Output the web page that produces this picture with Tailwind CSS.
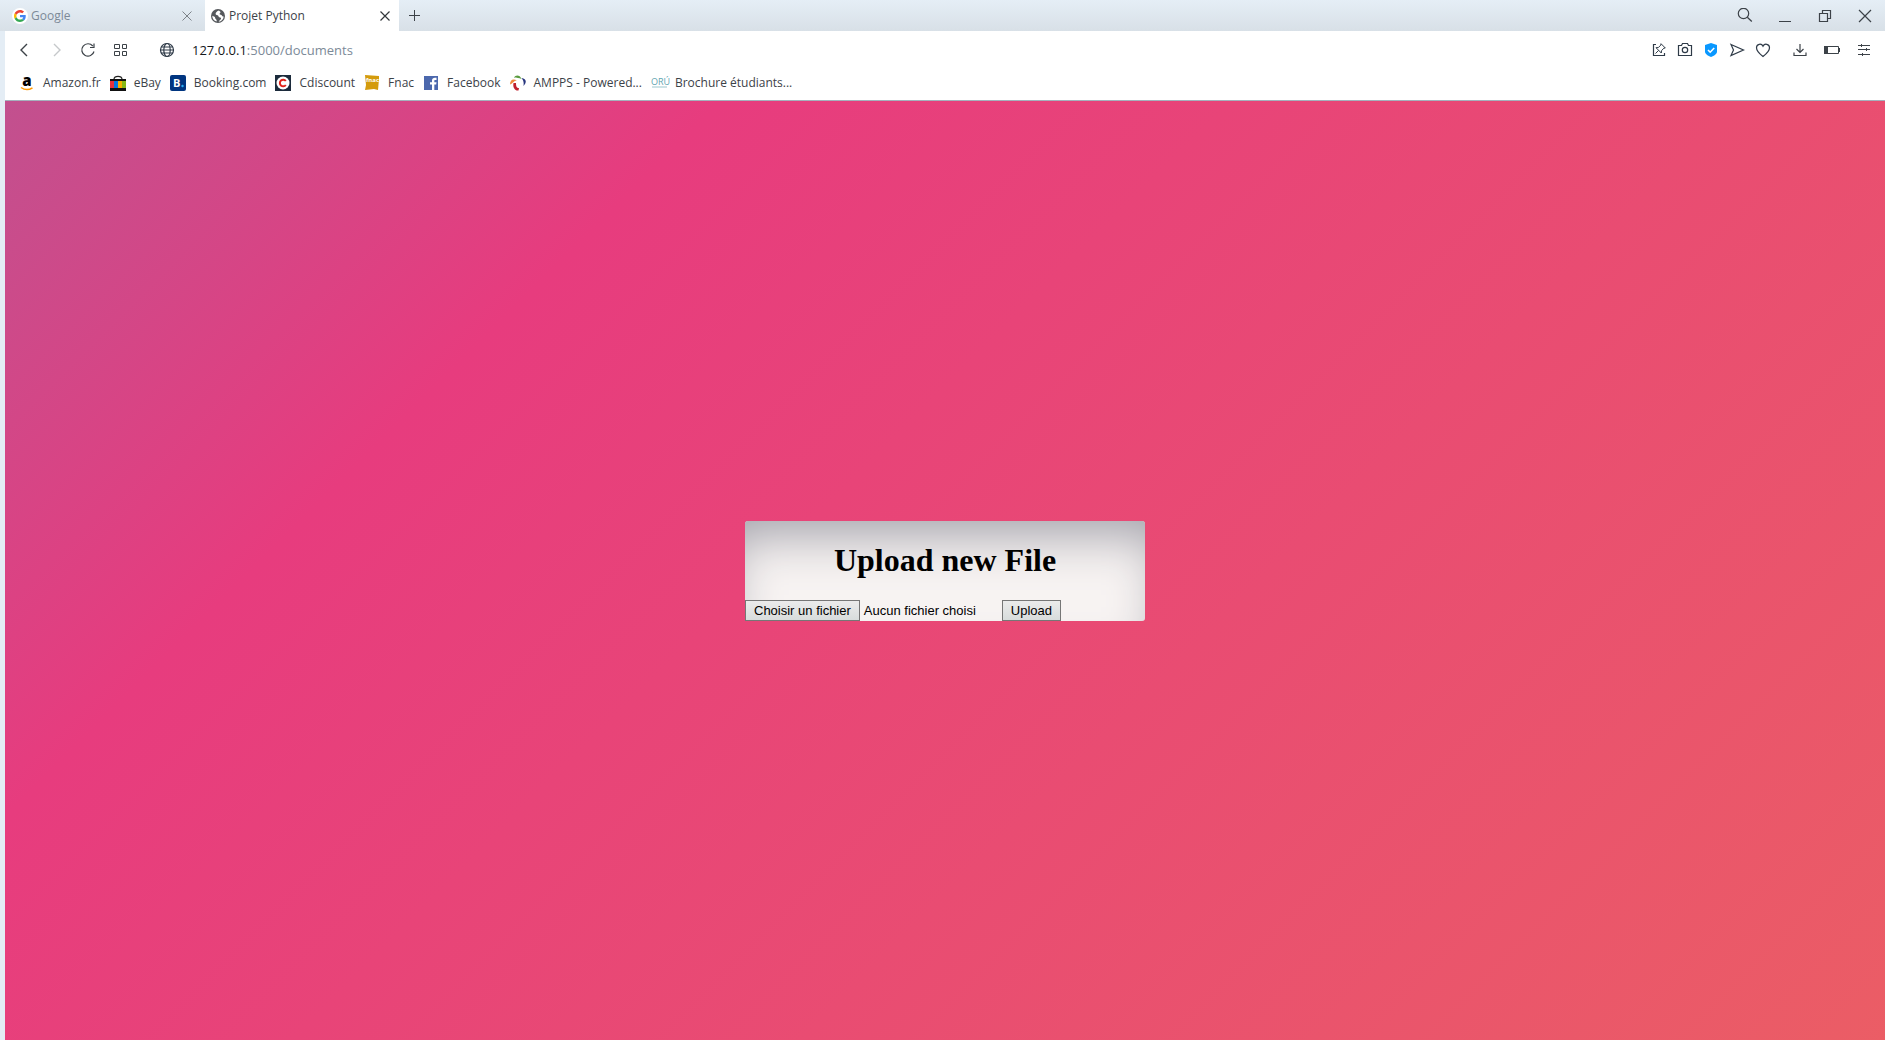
<!DOCTYPE html>
<html lang="fr">
<head>
<meta charset="utf-8">
<title>Projet Python</title>
<script src="https://cdn.jsdelivr.net/npm/@tailwindcss/browser@4"></script>
</head>
<body class="flex min-h-screen flex-col bg-[#e4edf5] font-['Open_Sans',sans-serif] text-[#3c4248]">

<header>
  <div class="flex h-[31px] items-stretch bg-linear-to-b from-[#e5eef6] to-[#d8e0e7]">
    <div class="flex w-[205px] items-center pl-3 pr-3 text-xs text-[#7c8a98]">
      <span class="grid size-4 place-items-center rounded-full bg-white">
        <svg class="size-3" viewBox="0 0 48 48"><path fill="#EA4335" d="M24 9.5c3.54 0 6.71 1.22 9.21 3.6l6.85-6.85C35.9 2.38 30.47 0 24 0 14.62 0 6.51 5.38 2.56 13.22l7.98 6.19C12.43 13.72 17.74 9.5 24 9.5z"/><path fill="#4285F4" d="M46.98 24.55c0-1.57-.15-3.09-.38-4.55H24v9.02h12.94c-.58 2.96-2.26 5.48-4.78 7.18l7.73 6c4.51-4.18 7.09-10.36 7.09-17.65z"/><path fill="#FBBC05" d="M10.53 28.59A14.5 14.5 0 0 1 9.77 24c0-1.6.27-3.14.76-4.59l-7.98-6.19A23.9 23.9 0 0 0 0 24c0 3.88.92 7.54 2.56 10.78l7.97-6.19z"/><path fill="#34A853" d="M24 48c6.48 0 11.93-2.13 15.89-5.81l-7.73-6c-2.15 1.45-4.92 2.3-8.16 2.3-6.26 0-11.57-4.22-13.47-9.91l-7.98 6.19C6.51 42.62 14.62 48 24 48z"/></svg>
      </span>
      <span class="ml-[3px] grow">Google</span>
      <button aria-label="Fermer Google"><svg class="size-3 stroke-[#7c8288]" viewBox="0 0 12 12" fill="none"><path d="M1.500 1.500l9 9M10.500 1.500l-9 9"/></svg></button>
    </div>
    <div class="flex w-[194px] items-center bg-white pl-[6px] pr-2 text-xs">
      <svg class="size-[14px]" viewBox="0 0 14 14"><circle cx="7" cy="7" r="7" fill="#55585c"/><path d="M8 1.500C6 2 4.500 3.500 4.600 5c.2 1.200 2 1 2.700 1.700.6.700 0 1.300 1 1.500 1.200.2 2 .4 1.700 1.500-.4 1.200-1.800 1.500-2.300 3 2.800-.4 4.800-2.500 5-5.300-.8.500-1.500-.1-1.800-.8-.5-.9-1.900-.6-2.300-1.300-.4-.9.900-1.200.9-2.100C9.500 2.400 8.300 2.300 8 1.500zM1.300 6.800C1.200 9.600 3 12 5.600 12.600c.4-1.300-.2-2-.9-2.500-.8-.7-.3-1.700-1.200-2.300-.7-.5-1.500-.5-2.200-1z" fill="#fff"/></svg>
      <span class="ml-1 grow">Projet Python</span>
      <button aria-label="Fermer Projet Python"><svg class="size-3 stroke-[#33373b]" viewBox="0 0 12 12" fill="none"><path d="M1.500 1.500l9 9M10.500 1.500l-9 9" stroke-width="1.200"/></svg></button>
    </div>
    <button aria-label="Nouvel onglet" class="ml-[7px] grid w-4 place-items-center"><svg class="size-3 stroke-[#3c4248]" viewBox="0 0 12 12" fill="none"><path d="M6.500 0v11M1 5.500h11"/></svg></button>
    <div class="ml-auto flex items-center gap-6 pr-3">
      <button aria-label="Rechercher"><svg class="size-4 stroke-[#3c4248]" viewBox="0 0 16 16" fill="none"><circle cx="6.500" cy="5.500" r="5.200" stroke-width="1.200"/><path d="M10.300 9.200l4.500 4.300" stroke-width="1.300"/></svg></button>
      <button aria-label="Réduire"><svg class="size-4 stroke-[#3c4248]" viewBox="0 0 16 16" fill="none"><path d="M2 13.500h12"/></svg></button>
      <button aria-label="Restaurer"><svg class="size-4 stroke-[#3c4248]" viewBox="0 0 16 16" fill="none"><path d="M2.500 5.500h8v8h-8zM5.500 5.500v-3h8v8h-3" stroke-width="1.200"/></svg></button>
      <button aria-label="Fermer"><svg class="size-4 stroke-[#3c4248]" viewBox="0 0 16 16" fill="none"><path d="M2 2l12 12M14 2L2 14" stroke-width="1.200"/></svg></button>
    </div>
  </div>

  <div class="ml-[5px] bg-white">
    <div class="flex h-[38px] items-center pl-[11px] pr-[13px]">
      <nav class="flex items-center gap-4">
        <button aria-label="Précédent"><svg class="size-4 stroke-[#3c4248]" viewBox="0 0 16 16" fill="none"><path d="M11 2L5 8l6 6" stroke-width="1.400"/></svg></button>
        <button aria-label="Suivant"><svg class="size-4 stroke-[#c5c8ca]" viewBox="0 0 16 16" fill="none"><path d="M6 2l6 6-6 6" stroke-width="1.400"/></svg></button>
        <button aria-label="Actualiser"><svg class="size-4 stroke-[#3c4248]" viewBox="0 0 16 16" fill="none"><path d="M14 9.500A6.200 6.200 0 1 1 12.800 4M14 1.500v4h-4" stroke-width="1.200"/></svg></button>
        <button aria-label="Accès rapide"><svg class="size-4 stroke-[#3c4248]" viewBox="0 0 16 16" fill="none"><path d="M2.500 2.500h5v4h-5zM10.500 2.500h4v4h-4zM2.500 9.500h5v4h-5zM10.500 9.500h4v4h-4z"/></svg></button>
      </nav>
      <svg class="ml-[31px] size-4 stroke-[#2f3b48]" viewBox="0 0 16 16" fill="none" stroke-width="1.200"><circle cx="8" cy="8" r="6.500"/><ellipse cx="8" cy="8" rx="3.200" ry="6.500"/><path d="M2.500 5h11M2.500 11h11M1.500 8h13"/></svg>
      <a href="#" class="ml-[17px] pt-px text-[13px] text-[#7c8a98]"><span class="text-[#15181b]">127.0.0.1</span>:5000/documents</a>
      <div class="ml-auto flex items-center gap-[10px]">
        <button aria-label="Épingler"><svg class="size-4 stroke-[#2f3b48]" viewBox="0 0 16 16" fill="none"><path d="M5 2.500H2.500v11h11V11" stroke-width="1.200"/><path d="M10 1.700l4.300 4.300-1.500.2-2.300 2.500-.2 2.300L5 5.700l2.300-.2L9.800 3.200zM7.600 8.400L4.500 11.500"/></svg></button>
        <button aria-label="Capture"><svg class="size-4 stroke-[#2f3b48]" viewBox="0 0 16 16" fill="none" stroke-width="1.200"><path d="M1.500 3.500h3l1-2h5l1 2h3v10h-13z"/><circle cx="8" cy="8" r="2.700"/></svg></button>
        <button aria-label="Bloqueur"><svg class="size-4" viewBox="0 0 16 16" fill="none"><path d="M8 1l6 2v6.500c0 2.500-3 4.500-6 5.500-3-1-6-3-6-5.500V3z" fill="#0a98ff"/><path d="M5 8l2.200 2.200L11.200 6" stroke="#fff" stroke-width="1.600"/></svg></button>
        <button aria-label="Envoyer"><svg class="size-4 stroke-[#2f3b48]" viewBox="0 0 16 16" fill="none" stroke-width="1.200"><path d="M2 2.500L14.500 8 2 13.500 4.500 8z"/></svg></button>
        <button aria-label="Favoris"><svg class="size-4 stroke-[#2f3b48]" viewBox="0 0 16 16" fill="none" stroke-width="1.200"><path d="M8 14.500C4 11.500 1.500 9 1.500 5.800 1.500 1.800 6.500 1 8 4.200c1.500-3.200 6.500-2.400 6.500 1.600C14.500 9 12 11.500 8 14.500z"/></svg></button>
        <button aria-label="Téléchargements" class="ml-[11px]"><svg class="size-4 stroke-[#3c4248]" viewBox="0 0 16 16" fill="none" stroke-width="1.200"><path d="M8 2v8M4.500 7L8 10.500 11.500 7M2 10.500v3h12v-3"/></svg></button>
        <button aria-label="Batterie" class="ml-[6px]"><svg class="size-4" viewBox="0 0 16 16" fill="none"><path d="M.5 4.500h14v7H.5zM15.500 6v4" stroke="#3c4248"/><path d="M0 4h4v8H0z" fill="#3c4248"/></svg></button>
        <button aria-label="Réglages" class="ml-[6px]"><svg class="size-4 stroke-[#3c4248]" viewBox="0 0 16 16" fill="none"><path d="M2 3.500h12M2 7.500h12M2 12.500h12M5.500 2v3M10.500 6v3M6.500 11v3"/></svg></button>
      </div>
    </div>

    <nav class="flex h-[32px] items-center gap-[9px] border-b border-[#a5b1bd] pb-1 pl-[14px] text-xs">
      <a href="#" class="flex items-center gap-2"><svg class="size-4 overflow-visible" viewBox="0 0 16 16"><text x="8" y="11" text-anchor="middle" font-family="Open Sans" font-weight="800" font-size="15">a</text><path d="M2 12.500c4 2.800 8 2.600 11.500.3" fill="none" stroke="#f90" stroke-width="1.500"/></svg>Amazon.fr</a>
      <a href="#" class="flex items-center gap-2"><svg class="size-4" viewBox="0 0 16 16"><path d="M4 4C4.500.5 11.500.5 12 4" fill="none" stroke="#222" stroke-width="1.200"/><path d="M0 4h16v12H0z" fill="#111"/><path d="M0 6h4v7H0z" fill="#e53238"/><path d="M4 6h4v7H4z" fill="#0078e0"/><path d="M8 6h4v7H8z" fill="#f5af02"/><path d="M12 6h4v7h-4z" fill="#86b817"/></svg>eBay</a>
      <a href="#" class="flex items-center gap-2"><svg class="size-4" viewBox="0 0 16 16"><rect width="16" height="16" rx="2" fill="#003580"/><text x="3" y="12" font-family="Open Sans" font-weight="700" font-size="11" fill="#fff">B</text><circle cx="12.500" cy="11" r="1.200" fill="#2bb0f5"/></svg>Booking.com</a>
      <a href="#" class="flex items-center gap-2"><svg class="size-4" viewBox="0 0 16 16"><path d="M0 0h16v16H0z" fill="#1c2b3c"/><circle cx="8" cy="8" r="6.500" fill="#fff"/><path d="M10.800 6A3.300 3.300 0 1 0 10.800 10" fill="none" stroke="#e2231a" stroke-width="2"/></svg>Cdiscount</a>
      <a href="#" class="flex items-center gap-2"><svg class="size-4" viewBox="0 0 16 16"><path d="M1 0l14 1v3l-1 11-4-1-9 1 1-5z" fill="#d49b0c"/><text x="2" y="7" font-family="Open Sans" font-weight="700" font-size="6" fill="#fff">fnac</text></svg>Fnac</a>
      <a href="#" class="flex items-center gap-2"><svg class="size-4" viewBox="0 0 16 16"><path d="M1 1h14v14H1z" fill="#4c68ad"/><path d="M9 15V9.500H7V7.300h2V5.500C9 3.600 10.200 2.800 12 2.800h1.500V5h-1.200c-.8 0-1 .3-1 1v1.300h2.200l-.3 2.200h-1.900V15z" fill="#fff"/></svg>Facebook</a>
      <a href="#" class="flex items-center gap-2"><svg class="size-4" viewBox="0 0 16 16"><path d="M4 2.500C5.500-.5 10-.5 11.500 4 9 2.500 7 3.500 4 2.500z" fill="#5b9c3f"/><path d="M0 9.500C0 5 3 3 7 5.500 4 5.500 3.500 8 0 9.500z" fill="#f08a3c"/><path d="M3.500 8C2.500 12.500 5 16 8.500 15.500L9 13C6.500 13 6 11 6 8z" fill="#c0202e"/><path d="M11.500 3c5 .5 5.500 4.500 2 8 .3-3 .5-5-2-8z" fill="#27357e"/></svg>AMPPS - Powered...</a>
      <a href="#" class="flex items-center gap-2"><svg class="size-4 overflow-visible" viewBox="0 0 16 16"><text x="0" y="10" font-family="Open Sans" font-size="9" fill="#5fa5b0">ORÚ</text><path d="M1 12h15" stroke="#9cc7cd"/></svg>Brochure étudiants...</a>
    </nav>
  </div>
</header>

<main class="ml-[5px] flex grow items-center justify-center bg-[linear-gradient(-45deg,#ee7752,#e73c7e,#23a6d5,#23d5ab)] bg-[length:400%_400%] bg-[position:95.6%_50%] text-black">
  <form class="w-[400px] rounded-[3px] bg-[#f7f3f2] shadow-[inset_0_30px_50px_-16px_#a3a2ab]">
    <h1 class="pb-[21px] pt-5 text-center font-['Liberation_Serif',serif] text-[32px] leading-[38px] font-bold">Upload new File</h1>
    <div class="flex h-[21px] items-stretch font-['Liberation_Sans',sans-serif] text-[13px] leading-[19px]">
      <label for="file" class="border border-[#767676] bg-linear-to-b from-[#ebebeb] to-[#d8dcdc] px-2">Choisir un fichier</label>
      <input id="file" type="file" class="sr-only">
      <span class="ml-1 w-[138px] pt-px">Aucun fichier choisi</span>
      <button class="border border-[#767676] bg-linear-to-b from-[#ebebeb] to-[#d8dcdc] px-2">Upload</button>
    </div>
  </form>
</main>
</body>
</html>
